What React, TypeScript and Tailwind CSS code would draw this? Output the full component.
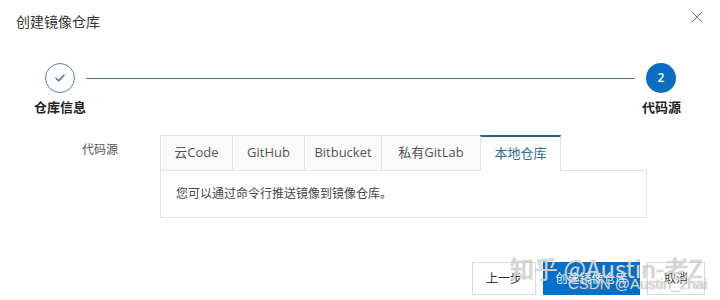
import { X } from 'lucide-react';

const tabs = ['云Code', 'GitHub', 'Bitbucket', '私有GitLab', '本地仓库'];
const tabWidths = ['w-[72px]', 'w-[72px]', 'w-[77px]', 'w-[99px]', 'w-[81px]'];

export default function App() {
  const active = 4;

  return (
    <div className="relative w-[720px] h-[300px] overflow-hidden bg-white text-[#333] font-['Open_Sans','Noto_Sans_CJK_SC',sans-serif]">
      {/* header */}
      <div className="flex items-start justify-between pl-[16px] pr-[13px] pt-[12px]">
        <h1 className="text-[14px] leading-[20px] text-[#333]">创建镜像仓库</h1>
        <X className="w-[20px] h-[20px] mt-[-5px] text-[#777]" strokeWidth={1.2} />
      </div>

      {/* steps */}
      <div className="mt-[31px] flex items-center pl-[45px] pr-[44px]">
        <div className="w-[30px] h-[30px] rounded-full border border-[#4f83ad] flex items-center justify-center">
          <svg width="12" height="10" viewBox="0 0 12 10" fill="none">
            <path d="M2 5.2 L4.8 7.8 L10 2.2" stroke="#3f6f96" strokeWidth="1.4" strokeLinecap="round" strokeLinejoin="round" />
          </svg>
        </div>
        <div className="flex-1 mx-[11px] h-px bg-[#4d7597]" />
        <div className="w-[30px] h-[30px] rounded-full bg-[#0b6cc2] flex items-center justify-center text-white text-[12px] font-semibold">
          2
        </div>
      </div>
      <div className="mt-[5px] flex justify-between pl-[34px] pr-[39px] text-[13px] leading-[18px] font-bold text-[#222]">
        <span>仓库信息</span>
        <span>代码源</span>
      </div>

      {/* form */}
      <div className="mt-[19px] flex">
        <div className="w-[160px] pl-[82px] pt-[7px] text-[12px] leading-[16px] text-[#555]">代码源</div>
        <div className="w-[487px]">
          <div className="flex h-[36px]">
            {tabs.map((t, i) => (
              <div
                key={t}
                className={`${tabWidths[i]} flex items-center justify-center text-[13px] border-l border-[#e3e3e3] ${
                  i === active
                    ? 'bg-white text-[#2f6b99] border-t-2 border-t-[#2b5f86] border-r pb-[1px]'
                    : 'bg-[#fafafa] text-[#555] border-t border-b'
                }`}
              >
                {t}
              </div>
            ))}
            <div className="flex-1 border-b border-[#e3e3e3]" />
          </div>
          <div className="h-[47px] border border-t-0 border-[#e3e3e3] pl-[15px] flex items-center text-[12px] text-[#444]">
            您可以通过命令行推送镜像到镜像仓库。
          </div>
        </div>
      </div>

      {/* footer */}
      <div className="mt-[44px] flex justify-end pr-[15px] gap-[7px] text-[12px]">
        <button className="w-[64px] h-[33px] border border-[#d9d9d9] bg-white text-[#333]">上一步</button>
        <button className="w-[97px] h-[33px] bg-[#0070cc] text-white">创建镜像仓库</button>
        <button className="w-[58px] h-[33px] border border-[#d9d9d9] bg-white text-[#333]">取消</button>
      </div>

      {/* watermarks */}
      <div className="absolute left-[510px] top-[254px] text-[24px] leading-[28px] text-white/70 [text-shadow:0_0_1px_#777] font-['Noto_Sans_CJK_SC',sans-serif] pointer-events-none">
        知乎 @Austin-老Z
      </div>
      <div className="absolute left-[568px] top-[275px] text-[15px] leading-[18px] text-white/70 [text-shadow:0_0_1px_#777] font-['Liberation_Sans',sans-serif] pointer-events-none">
        CSDN @Austin_zhai
      </div>
    </div>
  );
}
